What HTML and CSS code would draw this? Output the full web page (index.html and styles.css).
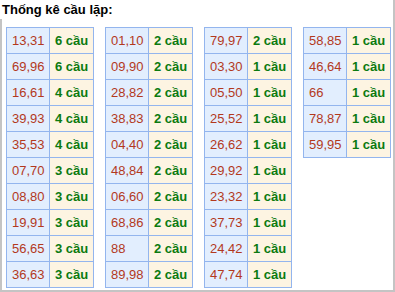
FILE: index.html
```html
<!DOCTYPE html>
<html>
<head>
<meta charset="utf-8">
<link rel="stylesheet" href="styles.css">
</head>
<body>
<div class="box">
  <div class="title">Thống kê cầu lặp:</div>
  <div class="content">
    <table class="tk">
      <tr><td class="num">13,31</td><td class="cnt">6 cầu</td></tr>
      <tr><td class="num">69,96</td><td class="cnt">6 cầu</td></tr>
      <tr><td class="num">16,61</td><td class="cnt">4 cầu</td></tr>
      <tr><td class="num">39,93</td><td class="cnt">4 cầu</td></tr>
      <tr><td class="num">35,53</td><td class="cnt">4 cầu</td></tr>
      <tr><td class="num">07,70</td><td class="cnt">3 cầu</td></tr>
      <tr><td class="num">08,80</td><td class="cnt">3 cầu</td></tr>
      <tr><td class="num">19,91</td><td class="cnt">3 cầu</td></tr>
      <tr><td class="num">56,65</td><td class="cnt">3 cầu</td></tr>
      <tr><td class="num">36,63</td><td class="cnt">3 cầu</td></tr>
    </table>
    <table class="tk">
      <tr><td class="num">01,10</td><td class="cnt">2 cầu</td></tr>
      <tr><td class="num">09,90</td><td class="cnt">2 cầu</td></tr>
      <tr><td class="num">28,82</td><td class="cnt">2 cầu</td></tr>
      <tr><td class="num">38,83</td><td class="cnt">2 cầu</td></tr>
      <tr><td class="num">04,40</td><td class="cnt">2 cầu</td></tr>
      <tr><td class="num">48,84</td><td class="cnt">2 cầu</td></tr>
      <tr><td class="num">06,60</td><td class="cnt">2 cầu</td></tr>
      <tr><td class="num">68,86</td><td class="cnt">2 cầu</td></tr>
      <tr><td class="num">88</td><td class="cnt">2 cầu</td></tr>
      <tr><td class="num">89,98</td><td class="cnt">2 cầu</td></tr>
    </table>
    <table class="tk">
      <tr><td class="num">79,97</td><td class="cnt">2 cầu</td></tr>
      <tr><td class="num">03,30</td><td class="cnt">1 cầu</td></tr>
      <tr><td class="num">05,50</td><td class="cnt">1 cầu</td></tr>
      <tr><td class="num">25,52</td><td class="cnt">1 cầu</td></tr>
      <tr><td class="num">26,62</td><td class="cnt">1 cầu</td></tr>
      <tr><td class="num">29,92</td><td class="cnt">1 cầu</td></tr>
      <tr><td class="num">23,32</td><td class="cnt">1 cầu</td></tr>
      <tr><td class="num">37,73</td><td class="cnt">1 cầu</td></tr>
      <tr><td class="num">24,42</td><td class="cnt">1 cầu</td></tr>
      <tr><td class="num">47,74</td><td class="cnt">1 cầu</td></tr>
    </table>
    <table class="tk">
      <tr><td class="num">58,85</td><td class="cnt">1 cầu</td></tr>
      <tr><td class="num">46,64</td><td class="cnt">1 cầu</td></tr>
      <tr><td class="num">66</td><td class="cnt">1 cầu</td></tr>
      <tr><td class="num">78,87</td><td class="cnt">1 cầu</td></tr>
      <tr><td class="num">59,95</td><td class="cnt">1 cầu</td></tr>
    </table>
  </div>
</div>
</body>
</html>
```

FILE: styles.css
```css
html, body {
  margin: 0;
  padding: 0;
  background: #ffffff;
}
body {
  font-family: "Liberation Sans", Arial, sans-serif;
  font-size: 13px;
}
.box {
  width: 393px;
  height: 290px;
  border-right: 2px solid #c4c4c4;
  border-bottom: 2px solid #c4c4c4;
  display: flex;
  flex-direction: column;
}
.title {
  height: 19px;
  padding-left: 2px;
  padding-top: 3px;
  box-sizing: border-box;
  font-weight: bold;
  line-height: 14px;
  color: #000000;
}
.content {
  flex: 1;
  border-left: 2px solid #c4c4c4;
  padding: 8px 0 0 4px;
  display: flex;
  align-items: flex-start;
  gap: 11px;
}
.tk {
  border-collapse: collapse;
  border: 1px solid #93b5ee;
  table-layout: fixed;
  width: 88px;
}
.tk td {
  border: 1px solid #93b5ee;
  padding: 5px 5px;
  line-height: 15px;
  font-size: 13px;
  white-space: nowrap;
  text-align: left;
  overflow: visible;
}
.tk .num {
  background: #e2eefe;
  color: #b3391d;
  width: 32px;
}
.tk .cnt {
  background: #fdf4e2;
  color: #0c7a10;
  font-weight: bold;
  width: 33px;
}
```
